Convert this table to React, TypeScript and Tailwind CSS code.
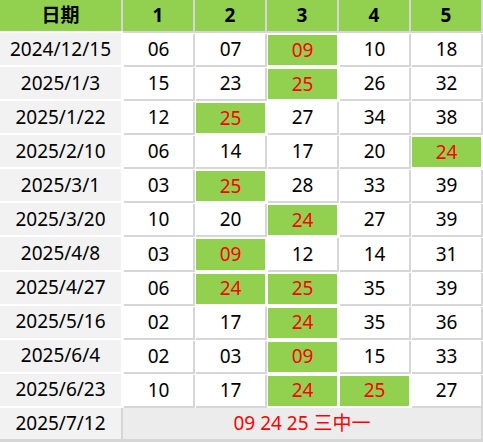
import React from "react";

const rows: [string, number[]][] = [
  ["2024/12/15", [6, 7, 9, 10, 18]],
  ["2025/1/3", [15, 23, 25, 26, 32]],
  ["2025/1/22", [12, 25, 27, 34, 38]],
  ["2025/2/10", [6, 14, 17, 20, 24]],
  ["2025/3/1", [3, 25, 28, 33, 39]],
  ["2025/3/20", [10, 20, 24, 27, 39]],
  ["2025/4/8", [3, 9, 12, 14, 31]],
  ["2025/4/27", [6, 24, 25, 35, 39]],
  ["2025/5/16", [2, 17, 24, 35, 36]],
  ["2025/6/4", [2, 3, 9, 15, 33]],
  ["2025/6/23", [10, 17, 24, 25, 27]],
];

const hits = [9, 24, 25];
const pad = (n: number) => (n < 10 ? "0" + n : String(n));

export default function App() {
  return (
    <div
      className="grid w-[483px] h-[442px] grid-cols-[123px_repeat(5,72px)] grid-rows-[33px_repeat(12,minmax(0,1fr))] bg-white text-[19px] text-black leading-none"
      style={{ fontFamily: '"Noto Sans", "Noto Sans CJK SC", sans-serif' }}
    >
      <div className="flex flex-col bg-white pb-[2px]">
        <div className="flex flex-1 items-center justify-center border-r-2 border-[#d6d6d6] bg-[#92d050] font-bold">
          日期
        </div>
      </div>
      {[1, 2, 3, 4, 5].map((n) => (
        <div
          key={n}
          className="flex items-center justify-center border-r-2 border-b-2 border-[#d6d6d6] bg-[#92d050] font-bold"
        >
          {n}
        </div>
      ))}
      {rows.map(([date, nums]) => (
        <React.Fragment key={date}>
          <div className="flex flex-col bg-white pr-[2px] pb-[2px]">
            <div className="flex flex-1 items-center justify-center bg-[#f2f2f2]">{date}</div>
          </div>
          {nums.map((v, i) =>
            hits.includes(v) ? (
              <div key={i} className="flex flex-col bg-white pl-[1px] pt-[2px] pr-[2px] pb-[2px]">
                <div className="flex flex-1 items-center justify-center bg-[#92d050] text-[#ff0000]">
                  {pad(v)}
                </div>
              </div>
            ) : (
              <div key={i} className="flex flex-col bg-white pl-[1px] pt-[1px]">
                <div className="flex flex-1 items-center justify-center border-r-2 border-b-2 border-[#d6d6d6]">
                  {pad(v)}
                </div>
              </div>
            )
          )}
        </React.Fragment>
      ))}
      <div className="flex items-center justify-center border-r-2 border-b-[3px] border-[#d6d6d6] bg-[#f2f2f2]">
        2025/7/12
      </div>
      <div className="col-span-5 flex items-center justify-center border-r-2 border-b-[3px] border-[#d6d6d6] bg-[#ececec] text-[#ff0000]">
        09 24 25 三中一
      </div>
    </div>
  );
}
